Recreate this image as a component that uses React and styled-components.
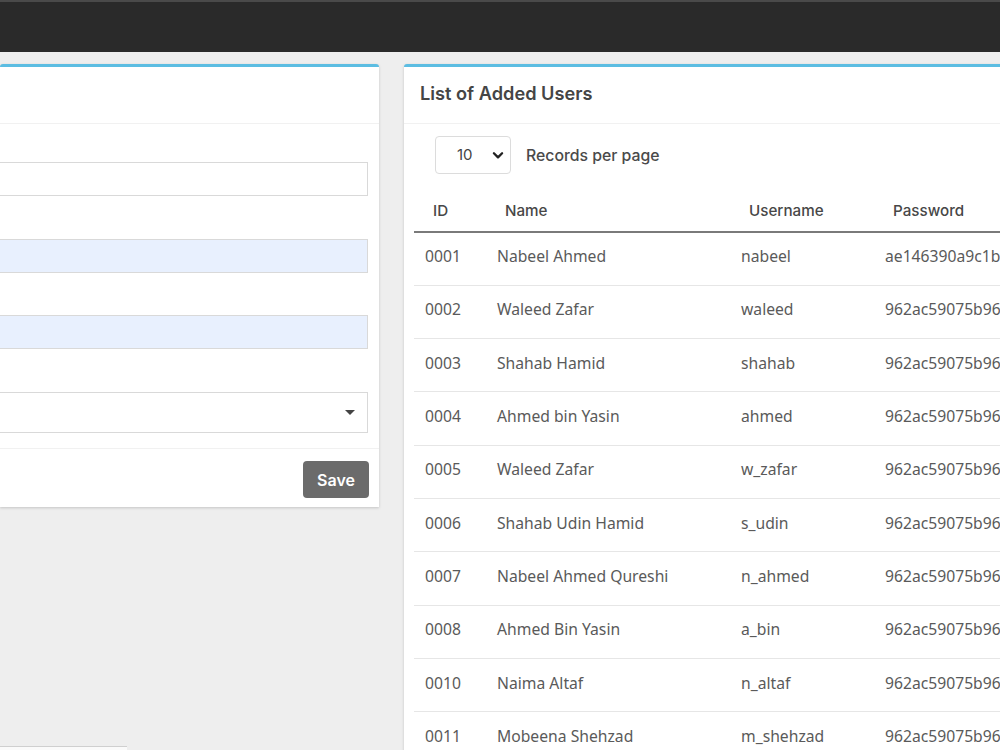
import React from "react";
import styled, { createGlobalStyle } from "styled-components";

const GlobalStyle = createGlobalStyle`
  html, body {
    margin: 0;
    padding: 0;
    height: 750px;
    overflow: hidden;
    background: #eeeeee;
  }
  body {
    font-family: "Noto Sans", "Open Sans", sans-serif;
  }
`;

const TopBar = styled.div`
  height: 50px;
  background: #2a2a2a;
  border-top: 2px solid #4a4a4a;
`;

const Content = styled.div`
  display: flex;
  align-items: flex-start;
  gap: 25px;
  padding-top: 12px;
`;

const Card = styled.div`
  background: #fff;
  border-top: 3px solid #5cbde2;
  border-radius: 3px 3px 0 0;
  box-shadow: 0 1px 3px rgba(0, 0, 0, 0.18);
  flex-shrink: 0;
  width: ${(p) => p.width}px;
`;

const CardHeader = styled.div`
  height: 57px;
  display: flex;
  align-items: center;
  padding: 0 16px 4px;
  border-bottom: 1px solid #f1f1f1;
  box-sizing: border-box;
`;

const Title = styled.h3`
  margin: 0;
  font-family: "Inter", sans-serif;
  font-weight: 600;
  font-size: 18.2px;
  color: #454545;
`;

const FormBody = styled.div`
  padding: 38px 11px 15px 0;
  display: flex;
  flex-direction: column;
  gap: 42.7px;
  border-bottom: 1px solid #f1f1f1;
`;

const Field = styled.div`
  height: ${(p) => (p.tall ? 41 : 34)}px;
  box-sizing: border-box;
  border: 1px solid #d9d9d9;
  border-left: none;
  background: ${(p) => (p.filled ? "#e8f0fe" : "#fff")};
  display: flex;
  align-items: center;
  justify-content: flex-end;
  padding-right: 12px;
`;

const Caret = styled.span`
  width: 0;
  height: 0;
  border-left: 5px solid transparent;
  border-right: 5px solid transparent;
  border-top: 5px solid #444;
`;

const FormFooter = styled.div`
  display: flex;
  justify-content: flex-end;
  padding: 12px 10px 9px 0;
`;

const SaveButton = styled.button`
  width: 66px;
  height: 37px;
  border: none;
  border-radius: 4px;
  background: #6b6b6b;
  color: #fff;
  font-family: "Inter", sans-serif;
  font-weight: 600;
  font-size: 16px;
`;

const TableBody = styled.div`
  padding: 11px 10px 0 10px;
`;

const PerPage = styled.div`
  display: flex;
  align-items: center;
  gap: 15px;
  padding-left: 21px;
  height: 39px;
`;

const PageSelect = styled.div`
  width: 76px;
  height: 38px;
  box-sizing: border-box;
  border: 1px solid #dcdcdc;
  border-radius: 4px;
  display: flex;
  align-items: center;
  justify-content: space-between;
  padding: 0 5px 0 21px;
  font-family: "Inter", sans-serif;
  font-size: 15px;
  color: #444;
`;

const PerPageLabel = styled.span`
  font-family: "Inter", sans-serif;
  font-size: 15.8px;
  font-weight: 500;
  color: #4a4a4a;
  padding-top: 2px;
`;

const Table = styled.table`
  border-collapse: collapse;
  margin-top: 22px;
  width: 620px;
  table-layout: fixed;
`;

const Th = styled.th`
  text-align: left;
  font-family: "Inter", sans-serif;
  font-size: 15.2px;
  font-weight: 500;
  color: #474747;
  height: 36px;
  box-sizing: border-box;
  padding: 5px 0 0 ${(p) => p.pad || 11}px;
  vertical-align: top;
  border-bottom: 2px solid #7a7a7a;
`;

const Td = styled.td`
  font-size: 15.7px;
  color: #5a5a5a;
  height: 53.3px;
  box-sizing: border-box;
  padding: 0 0 5px 11px;
  white-space: nowrap;
  overflow: hidden;
  border-bottom: 1px solid #e6e6e6;
`;

const BottomStrip = styled.div`
  position: fixed;
  left: 0;
  bottom: 0;
  width: 127px;
  height: 3px;
  background: #fafafa;
  border-top: 1px solid #cfcfcf;
`;

const users = [
  ["0001", "Nabeel Ahmed", "nabeel", "ae146390a9c1b"],
  ["0002", "Waleed Zafar", "waleed", "962ac59075b96"],
  ["0003", "Shahab Hamid", "shahab", "962ac59075b96"],
  ["0004", "Ahmed bin Yasin", "ahmed", "962ac59075b96"],
  ["0005", "Waleed Zafar", "w_zafar", "962ac59075b96"],
  ["0006", "Shahab Udin Hamid", "s_udin", "962ac59075b96"],
  ["0007", "Nabeel Ahmed Qureshi", "n_ahmed", "962ac59075b96"],
  ["0008", "Ahmed Bin Yasin", "a_bin", "962ac59075b96"],
  ["0010", "Naima Altaf", "n_altaf", "962ac59075b96"],
  ["0011", "Mobeena Shehzad", "m_shehzad", "962ac59075b96"],
];

function Chevron() {
  return (
    <svg width="14" height="14" viewBox="0 0 24 24" fill="none" stroke="#222" strokeWidth="4" strokeLinecap="round" strokeLinejoin="round">
      <polyline points="5 9 12 16 19 9" />
    </svg>
  );
}

export default function App() {
  return (
    <>
      <GlobalStyle />
      <TopBar />
      <Content>
        <Card width={379}>
          <CardHeader />
          <FormBody>
            <Field />
            <Field filled />
            <Field filled />
            <Field tall>
              <Caret />
            </Field>
          </FormBody>
          <FormFooter>
            <SaveButton>Save</SaveButton>
          </FormFooter>
        </Card>
        <Card width={640}>
          <CardHeader>
            <Title>List of Added Users</Title>
          </CardHeader>
          <TableBody>
            <PerPage>
              <PageSelect>
                10
                <Chevron />
              </PageSelect>
              <PerPageLabel>Records per page</PerPageLabel>
            </PerPage>
            <Table>
              <colgroup>
                <col style={{ width: 72 }} />
                <col style={{ width: 244 }} />
                <col style={{ width: 144 }} />
                <col style={{ width: 160 }} />
              </colgroup>
              <thead>
                <tr>
                  <Th pad={19}>ID</Th>
                  <Th pad={19}>Name</Th>
                  <Th pad={19}>Username</Th>
                  <Th pad={19}>Password</Th>
                </tr>
              </thead>
              <tbody>
                {users.map((u) => (
                  <tr key={u[0]}>
                    {u.map((c, i) => (
                      <Td key={i}>{c}</Td>
                    ))}
                  </tr>
                ))}
              </tbody>
            </Table>
          </TableBody>
        </Card>
      </Content>
      <BottomStrip />
    </>
  );
}
